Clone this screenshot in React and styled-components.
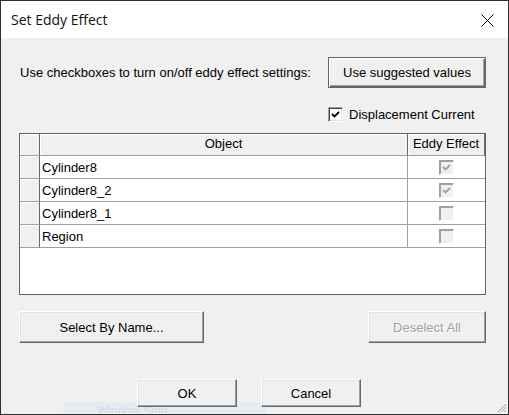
import styled, { createGlobalStyle } from "styled-components";

const GlobalStyle = createGlobalStyle`
  html, body {
    margin: 0;
    padding: 0;
    background: #1e1e1e;
  }
  * { box-sizing: border-box; }
`;

const rows = [
  { name: "Cylinder8", checked: true },
  { name: "Cylinder8_2", checked: true },
  { name: "Cylinder8_1", checked: false },
  { name: "Region", checked: false },
];

const Window = styled.div`
  position: relative;
  width: 509px;
  height: 415px;
  border: 1px solid #2f2f2f;
  background: #f0f0f0;
  display: flex;
  flex-direction: column;
  font-family: "Liberation Sans", Arial, sans-serif;
  font-size: 13px;
  color: #000;
  overflow: hidden;
`;

const TitleBar = styled.div`
  height: 37px;
  flex: none;
  background: #fff;
  display: flex;
  align-items: center;
  justify-content: space-between;
  padding: 0 14px 0 10px;
`;

const Title = styled.div`
  font-family: "Open Sans", "Noto Sans", sans-serif;
  font-size: 14px;
  color: #111;
  margin-top: -1px;
`;

const CloseIcon = styled.svg`
  width: 13px;
  height: 13px;
  display: block;
  margin-top: 1px;
`;

const Body = styled.div`
  flex: 1;
  display: flex;
  flex-direction: column;
  padding: 19px 22px 0 18px;
`;

const TopRow = styled.div`
  display: flex;
  align-items: center;
  justify-content: space-between;
`;

const Prompt = styled.span`
  padding-left: 1px;
`;

const Button = styled.button`
  font-family: "Liberation Sans", Arial, sans-serif;
  font-size: 13px;
  background: #f0f0f0;
  color: ${(p) => (p.disabled ? "#a0a0a0" : "#000")};
  text-shadow: ${(p) => (p.disabled ? "1px 1px 0 #fff" : "none")};
  width: ${(p) => p.$w}px;
  height: ${(p) => p.$h}px;
  padding: 0;
  border: 1px solid;
  border-color: #fff #696969 #696969 #fff;
  box-shadow: inset -1px -1px 0 #a0a0a0, inset 1px 1px 0 #e3e3e3;
  cursor: default;
`;

const DefaultButton = styled(Button)`
  border-color: #646464;
  box-shadow: inset 1px 1px 0 #fff, inset -1px -1px 0 #696969, inset -2px -2px 0 #a0a0a0;
`;

const CheckRow = styled.label`
  align-self: flex-end;
  width: 158px;
  margin-top: 19px;
  height: 15px;
  display: flex;
  align-items: center;
  gap: 6px;
`;

const CheckBox = styled.span`
  width: 15px;
  height: 15px;
  flex: none;
  display: flex;
  align-items: center;
  justify-content: center;
  background: ${(p) => (p.$disabled ? "#f0f0f0" : "#fff")};
  border: 1px solid;
  border-color: #a0a0a0 #fff #fff #a0a0a0;
  box-shadow: ${(p) =>
    p.$disabled
      ? "inset 1px 1px 0 #a0a0a0"
      : "inset 1px 1px 0 #404040, inset -1px -1px 0 #e3e3e3"};
`;

const Grid = styled.div`
  margin-top: 11px;
  height: 162px;
  border: 1px solid #646464;
  background: #fff;
  display: grid;
  grid-template-columns: 20px 368px 1fr;
  grid-auto-rows: 23px;
  grid-template-rows: 22px;
  align-content: start;
`;

const HeadCell = styled.div`
  background: #f0f0f0;
  border-right: 1px solid #696969;
  border-bottom: 1px solid #a0a0a0;
  box-shadow: inset 1px 1px 0 #fff;
  display: flex;
  align-items: center;
  justify-content: center;
  white-space: nowrap;
  padding-bottom: 2px;
`;

const RowHead = styled.div`
  background: #f0f0f0;
  border-right: 1px solid #696969;
  border-bottom: 1px solid #a0a0a0;
  box-shadow: inset 1px 1px 0 #fff;
`;

const Cell = styled.div`
  border-right: ${(p) => (p.$last ? "none" : "1px solid #a0a0a0")};
  border-bottom: 1px solid #a0a0a0;
  display: flex;
  align-items: center;
  justify-content: ${(p) => (p.$center ? "center" : "flex-start")};
  padding-left: ${(p) => (p.$center ? "0" : "2px")};
  padding-top: 1px;
`;

const ActionRow = styled.div`
  margin-top: 16px;
  display: flex;
  justify-content: space-between;
`;

const FooterRow = styled.div`
  margin-top: 36px;
  display: flex;
  justify-content: center;
  gap: 24px;
  padding-right: 7px;
  position: relative;
  z-index: 1;
`;

const Ghost = styled.div`
  position: absolute;
  left: 62px;
  bottom: 1px;
  width: 203px;
  height: 11px;
  background: #e4ebf3;
  color: #d2dae4;
  font-size: 12px;
  line-height: 18px;
  padding-left: 34px;
  overflow: hidden;
`;

const Grip = styled.svg`
  position: absolute;
  right: 1px;
  bottom: 1px;
  width: 11px;
  height: 11px;
`;

const Check = ({ color }) => (
  <svg width="9" height="9" viewBox="0 0 9 9">
    <path d="M1 4 L3.5 6.5 L8 2" fill="none" stroke={color} strokeWidth="1.8" />
  </svg>
);

const App = () => {
  return (
    <>
      <GlobalStyle />
      <Window>
        <TitleBar>
          <Title>Set Eddy Effect</Title>
          <CloseIcon viewBox="0 0 13 13">
            <path d="M0.5 0.5 L12.5 12.5 M12.5 0.5 L0.5 12.5" stroke="#000" strokeWidth="1" />
          </CloseIcon>
        </TitleBar>
        <Body>
          <TopRow>
            <Prompt>Use checkboxes to turn on/off eddy effect settings:</Prompt>
            <DefaultButton $w={158} $h={31}>Use suggested values</DefaultButton>
          </TopRow>
          <CheckRow>
            <CheckBox>
              <Check color="#000" />
            </CheckBox>
            Displacement Current
          </CheckRow>
          <Grid>
            <HeadCell />
            <HeadCell>Object</HeadCell>
            <HeadCell>Eddy Effect</HeadCell>
            {rows.map((r) => (
              <>
                <RowHead key={r.name + "h"} />
                <Cell key={r.name}>{r.name}</Cell>
                <Cell key={r.name + "c"} $center $last>
                  <CheckBox $disabled>
                    {r.checked && <Check color="#a0a0a0" />}
                  </CheckBox>
                </Cell>
              </>
            ))}
          </Grid>
          <ActionRow>
            <Button $w={185} $h={32}>Select By Name...</Button>
            <Button $w={118} $h={32} disabled>Deselect All</Button>
          </ActionRow>
          <FooterRow>
            <Button $w={100} $h={28}>OK</Button>
            <Button $w={100} $h={28}>Cancel</Button>
          </FooterRow>
        </Body>
        <Ghost>Window Spin</Ghost>
        <Grip viewBox="0 0 11 11">
          <path d="M10 2 L2 10 M10 5 L5 10 M10 8 L8 10" stroke="#a0a0a0" strokeWidth="1" />
        </Grip>
      </Window>
    </>
  );
};

export default App;
